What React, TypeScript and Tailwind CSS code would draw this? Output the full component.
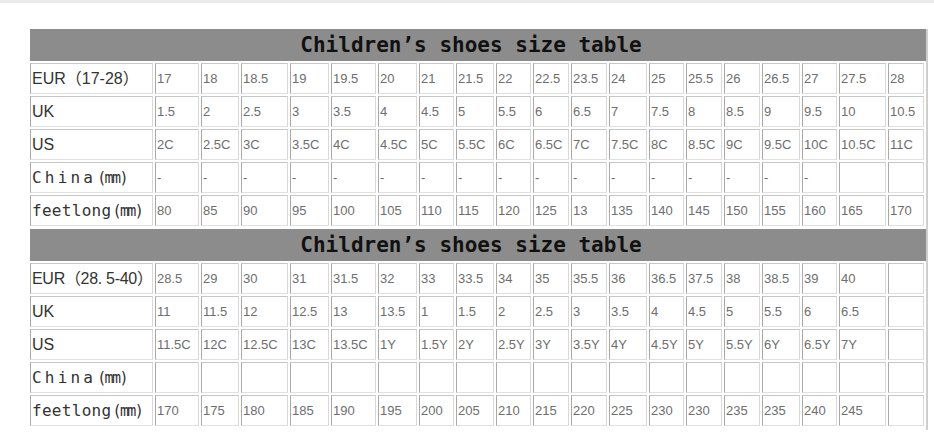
import React from "react";

const W = [
  "w-[44px]", "w-[38px]", "w-[47px]", "w-[39px]", "w-[45px]", "w-[39px]", "w-[35px]",
  "w-[38px]", "w-[35px]", "w-[36px]", "w-[36px]", "w-[38px]", "w-[35px]", "w-[36px]",
  "w-[36px]", "w-[38px]", "w-[35px]", "w-[47px]", "w-[36px]",
];

type Row = { label: React.ReactNode; values: string[] };

const dash = (n: number) => Array.from({ length: n }, () => "-");
const blank = (n: number) => Array.from({ length: n }, () => "");

const mm = (
  <span className="font-['DejaVu_Sans_Mono',monospace] text-[15px] tracking-[-1.6px] ml-[1px]">(mm)</span>
);

const mono = (word: string) => (
  <span className="whitespace-nowrap">
    <span className="font-['DejaVu_Sans_Mono',monospace] text-[16px] tracking-[0.3px]">{word}</span>
    {mm}
  </span>
);

const china = (
  <span className="whitespace-nowrap">
    <span className="font-['DejaVu_Sans_Mono',monospace] text-[16px] tracking-[3.2px]">China</span>
    {mm}
  </span>
);

const table1: Row[] = [
  {
    label: <span className="whitespace-nowrap">EUR（17-28）</span>,
    values: ["17", "18", "18.5", "19", "19.5", "20", "21", "21.5", "22", "22.5", "23.5", "24", "25", "25.5", "26", "26.5", "27", "27.5", "28"],
  },
  {
    label: "UK",
    values: ["1.5", "2", "2.5", "3", "3.5", "4", "4.5", "5", "5.5", "6", "6.5", "7", "7.5", "8", "8.5", "9", "9.5", "10", "10.5"],
  },
  {
    label: "US",
    values: ["2C", "2.5C", "3C", "3.5C", "4C", "4.5C", "5C", "5.5C", "6C", "6.5C", "7C", "7.5C", "8C", "8.5C", "9C", "9.5C", "10C", "10.5C", "11C"],
  },
  { label: china, values: [...dash(17), "", ""] },
  {
    label: mono("feetlong"),
    values: ["80", "85", "90", "95", "100", "105", "110", "115", "120", "125", "13", "135", "140", "145", "150", "155", "160", "165", "170"],
  },
];

const table2: Row[] = [
  {
    label: <span className="whitespace-nowrap tracking-[-0.3px]">EUR（28. 5-40）</span>,
    values: ["28.5", "29", "30", "31", "31.5", "32", "33", "33.5", "34", "35", "35.5", "36", "36.5", "37.5", "38", "38.5", "39", "40", ""],
  },
  {
    label: "UK",
    values: ["11", "11.5", "12", "12.5", "13", "13.5", "1", "1.5", "2", "2.5", "3", "3.5", "4", "4.5", "5", "5.5", "6", "6.5", ""],
  },
  {
    label: "US",
    values: ["11.5C", "12C", "12.5C", "13C", "13.5C", "1Y", "1.5Y", "2Y", "2.5Y", "3Y", "3.5Y", "4Y", "4.5Y", "5Y", "5.5Y", "6Y", "6.5Y", "7Y", ""],
  },
  { label: china, values: blank(19) },
  {
    label: mono("feetlong"),
    values: ["170", "175", "180", "185", "190", "195", "200", "205", "210", "215", "220", "225", "230", "230", "235", "235", "240", "245", ""],
  },
];

const cellBorder =
  "border border-t-[#c6c6c6] border-l-[#a9a9a9] border-r-[#d8d8d8] border-b-[#e0e0e0]";

function Title() {
  return (
    <div className="h-[32px] bg-[#8c8c8c] flex items-center justify-center pr-[14px]">
      <span className="font-['DejaVu_Sans_Mono',monospace] font-bold text-[21px] text-[#111] whitespace-nowrap leading-none">
        Children’s shoes size table
      </span>
    </div>
  );
}

function TableRow({ row }: { row: Row }) {
  return (
    <div className="flex gap-x-[2px] h-[31px]">
      <div
        className={`w-[123px] shrink-0 ${cellBorder} flex items-center pl-[1px] text-[16px] text-[#333] font-['Liberation_Sans','Noto_Sans_CJK_SC',sans-serif] overflow-visible`}
      >
        {row.label}
      </div>
      {row.values.map((v, i) => (
        <div
          key={i}
          className={`${W[i]} shrink-0 ${cellBorder} flex items-center pl-[1px] text-[13px] text-[#6e6e6e] font-['Liberation_Sans',sans-serif] whitespace-nowrap overflow-visible`}
        >
          {v}
        </div>
      ))}
    </div>
  );
}

function Block({ rows }: { rows: Row[] }) {
  return (
    <div className="flex flex-col gap-y-[2px]">
      <Title />
      <div className="flex flex-col gap-y-[2px]">
        {rows.map((r, i) => (
          <TableRow key={i} row={r} />
        ))}
      </div>
    </div>
  );
}

export default function App() {
  return (
    <div className="w-[934px] h-[440px] bg-white overflow-hidden">
      <div className="h-[3px] bg-[#ebebeb]" />
      <div className="pt-[26px] pl-[30px]">
        <div className="w-[898px] border-r-[2px] border-r-[#cfcfcf] flex flex-col gap-y-[3px] pb-[4px]">
          <Block rows={table1} />
          <Block rows={table2} />
        </div>
      </div>
    </div>
  );
}
